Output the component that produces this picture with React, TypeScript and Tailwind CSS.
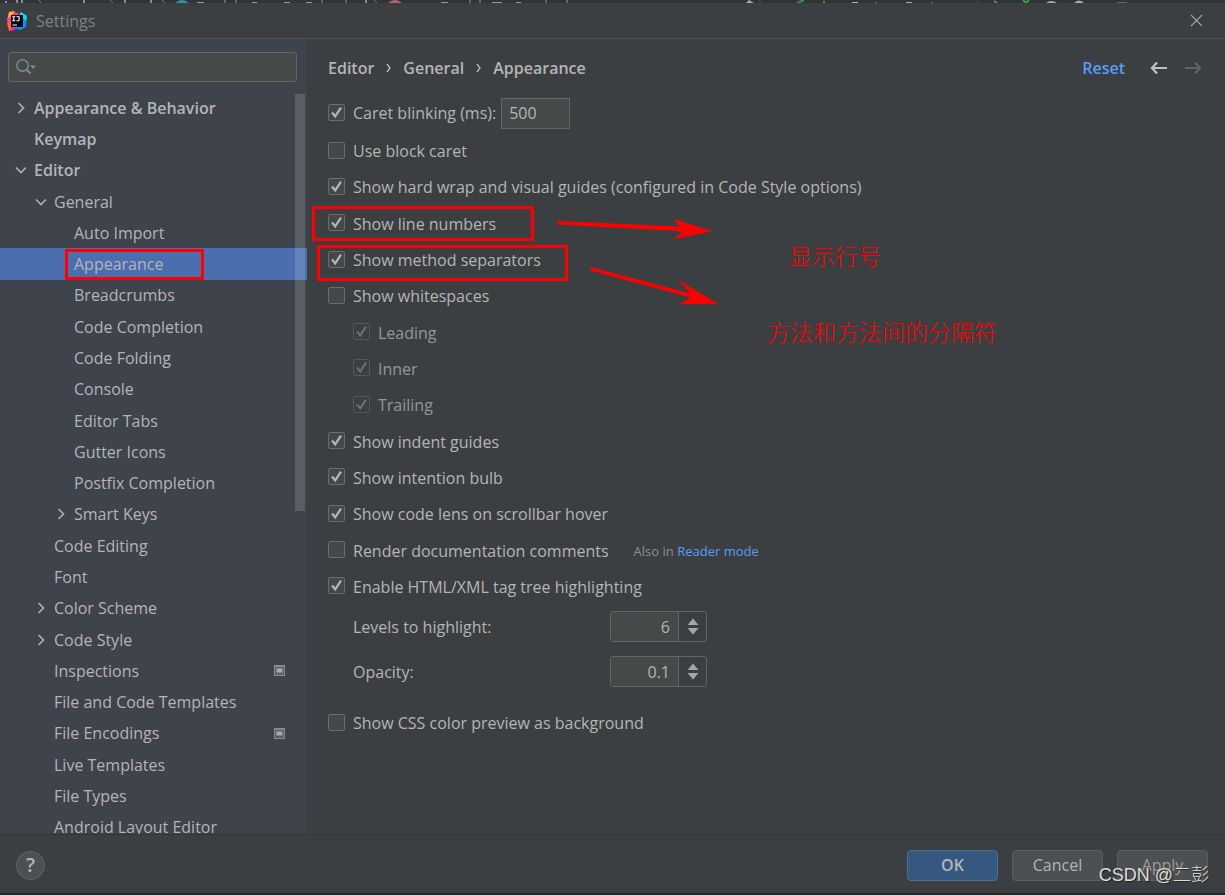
import React from "react";

type Node = { label: string; depth: number; arrow?: "open" | "closed"; selected?: boolean; project?: boolean };

const tree: Node[] = [
  { label: "Appearance & Behavior", depth: 0, arrow: "closed" },
  { label: "Keymap", depth: 0 },
  { label: "Editor", depth: 0, arrow: "open" },
  { label: "General", depth: 1, arrow: "open" },
  { label: "Auto Import", depth: 2 },
  { label: "Appearance", depth: 2, selected: true },
  { label: "Breadcrumbs", depth: 2 },
  { label: "Code Completion", depth: 2 },
  { label: "Code Folding", depth: 2 },
  { label: "Console", depth: 2 },
  { label: "Editor Tabs", depth: 2 },
  { label: "Gutter Icons", depth: 2 },
  { label: "Postfix Completion", depth: 2 },
  { label: "Smart Keys", depth: 2, arrow: "closed" },
  { label: "Code Editing", depth: 1 },
  { label: "Font", depth: 1 },
  { label: "Color Scheme", depth: 1, arrow: "closed" },
  { label: "Code Style", depth: 1, arrow: "closed" },
  { label: "Inspections", depth: 1, project: true },
  { label: "File and Code Templates", depth: 1 },
  { label: "File Encodings", depth: 1, project: true },
  { label: "Live Templates", depth: 1 },
  { label: "File Types", depth: 1 },
  { label: "Android Layout Editor", depth: 1 },
];

const indents = ["pl-[14px] font-semibold", "pl-[34px]", "pl-[54px]"];

function TreeRow({ node }: { node: Node }) {
  return (
    <li className={`flex ${node.selected ? "bg-[#4b6eaf]" : ""}`}>
      <button type="button" className={`flex flex-1 items-center pr-5 text-left ${indents[node.depth]}`}>
        <span className="flex w-5 shrink-0">
          {node.arrow && (
            <svg viewBox="0 0 14 14" className="size-[14px]" fill="none" stroke="#adb0b3" strokeWidth="1.7">
              {node.arrow === "open" ? <path d="M2 4.5l5 5 5-5" /> : <path d="M4.5 2l5 5-5 5" />}
            </svg>
          )}
        </span>
        <span className="relative flex-1 whitespace-nowrap">
          {node.label}
          {node.selected && (
            <span className="absolute -top-1 -left-[9px] h-[31px] w-[139px] border-3 border-[#ff0000]" />
          )}
        </span>
        {node.project && (
          <svg viewBox="0 0 11 11" className="mr-[2px] h-[11px] w-[11px]">
            <path d="M0 0h11v11H0z" fill="#848d95" />
            <path d="M1 2h9v8H1z" fill="#59626a" />
            <path d="M2.500 3.500h6v4h-6z" fill="#a0abb3" />
          </svg>
        )}
      </button>
    </li>
  );
}

type CheckProps = {
  label: string;
  checked?: boolean;
  disabled?: boolean;
  mark?: string;
  children?: React.ReactNode;
};

function Check({ label, checked, disabled, mark, children }: CheckProps) {
  return (
    <div className={`flex items-center ${disabled ? "pl-[25px] text-[#949698]" : ""}`}>
      <label className="relative flex items-center gap-2 whitespace-nowrap">
        <span className="relative mb-[2px] flex size-[17px] shrink-0">
          <input
            type="checkbox"
            defaultChecked={checked}
            disabled={disabled}
            className="peer size-[17px] appearance-none rounded-[2px] border border-[#6b6b6b] bg-[#43494a] disabled:border-[#555859] disabled:bg-[#3c3f41]"
          />
          <svg
            viewBox="0 0 17 17"
            className="pointer-events-none absolute inset-0 hidden text-[#b4b6b7] peer-checked:block peer-disabled:text-[#6a6d6f]"
            fill="none"
            stroke="currentColor"
            strokeWidth="2.2"
          >
            <path d="M4 8.5l3.2 3.8L13 3.6" />
          </svg>
        </span>
        {label}
        {mark && <span className={`absolute border-3 border-[#ff0000] ${mark}`} />}
      </label>
      {children}
    </div>
  );
}

function Spinner({ id, label, value }: { id: string; label: string; value: string }) {
  return (
    <div className="flex items-center pl-[25px]">
      <label htmlFor={id} className="w-[257px]">{label}</label>
      <div className="flex h-[31px] w-[97px] rounded-[3px] border border-[#646464]">
        <input id={id} defaultValue={value} className="w-0 flex-1 bg-[#45494a] pr-2 text-right" />
        <span className="flex w-[28px] flex-col items-center justify-center gap-[3px] border-l border-[#646464]">
          <button type="button" aria-label={`Increase ${label}`}>
            <svg viewBox="0 0 12 7" className="block h-[7px] w-3" fill="#a4a7a9"><path d="M6 0.500l5.500 6.500H0.500z" /></svg>
          </button>
          <button type="button" aria-label={`Decrease ${label}`}>
            <svg viewBox="0 0 12 7" className="block h-[7px] w-3" fill="#a4a7a9"><path d="M6 6.500L11.500 0H0.500z" /></svg>
          </button>
        </span>
      </div>
    </div>
  );
}

function TopStrip() {
  return (
    <svg className="h-[3px] w-full shrink-0 bg-[#313436]" viewBox="0 0 1225 3" preserveAspectRatio="xMinYMin slice">
      <path d="M6 1v2M17 0v3M22 0v3M84 0v3M125 0v3M151 0v3M366 0v3" stroke="#aaa" strokeWidth="1.5" />
      <path d="M39 0l2 3M110 0l3 3M162 0l3 3M374 0l3 3" stroke="#777" />
      <path d="M175 3q7-6 14 0z" fill="#3e8ba8" />
      <path d="M388 3q7-6 14 0z" fill="#b8616f" />
      <path d="M197 2.5h7M252 2.5h5M284 2.5h6M306 2.5h6M441 2.5h7M492 2.5h10M516 2.5h5M225 0v3M236 0v3M322 0v3M346 0v3M470 0v3M480 0v3M546 0v3M567 0v3" stroke="#999" />
      <path d="M746 3l3-3 5 3z" fill="#aaa" />
      <path d="M797 3l7-3M824 3v-2M994 1l3 2M1023 0l3 3 3-3" stroke="#3f9a49" strokeWidth="2" fill="none" />
      <path d="M852 2.5h6M876 2v1M906 2.5h6M932 2v1" stroke="#aaa" />
      <path d="M1046 3q5-4 11 0zM1074 3q5-5 10 0" fill="#aaa" />
      <path d="M760 0v3M799 0v3M978 0v3" stroke="#4c4f51" />
      <path d="M1117 2.5h10" stroke="#666" />
    </svg>
  );
}

function Logo() {
  return (
    <svg viewBox="0 0 20 20" className="size-5">
      <path d="M2 1l5-1 2 4-5 5-4 1z" fill="#ffb02e" />
      <path d="M0 8l4-3v6l-3 3z" fill="#f0439a" />
      <path d="M7 1l4 1 1 3H5z" fill="#ff3a68" />
      <path d="M0 12l4-2v6l4 1-3 2-3 1z" fill="#ff6a2c" />
      <path d="M3 16l5-1 1 3-4 2z" fill="#e22fae" />
      <path d="M12 4l2-3 6 4-1 11-6 3-6-2z" fill="#0b8ff5" />
      <path d="M12 4l2-3 6 4-1 5z" fill="#15d5ef" />
      <path d="M4 4h12v12H4z" fill="#0b0610" />
      <path d="M5.3 5.7h3M6.8 5.7v4M5.3 9.7h3M9.5 5.7h2.6v3q0 1-1 1H9.5M5.5 14h4.5" stroke="#fff" strokeWidth="1.1" fill="none" />
    </svg>
  );
}

const buttonBase = "h-[31px] w-[91px] rounded-[4px] border";

export default function App() {
  return (
    <div className="relative flex h-screen flex-col overflow-hidden bg-[#3c3f41] font-['Open_Sans','Noto_Sans_CJK_SC',sans-serif] text-[16px] leading-[22px] text-[#b4b5b6]">
      <TopStrip />
      <header className="flex h-9 shrink-0 items-center gap-[9px] border-b border-[#515355] px-[7px]">
        <Logo />
        <h1 className="flex-1 text-[16px] text-[#7e8082]">Settings</h1>
        <button type="button" aria-label="Close" className="mr-[15px]">
          <svg viewBox="0 0 13 13" className="block size-[13px]" stroke="#a0a2a3" strokeWidth="1.1"><path d="M1 1l11 11M12 1L1 12" /></svg>
        </button>
      </header>

      <div className="flex min-h-0 flex-1">
        <aside className="relative flex w-[307px] shrink-0 flex-col overflow-hidden bg-[#3e434c]">
          <div className="mx-2 mt-[13px] mr-[10px] mb-[10px] flex h-[30px] shrink-0 items-center rounded-[3px] border border-[#646566] bg-[#45494a] pl-[7px]">
            <svg viewBox="0 0 20 16" className="h-4 w-5 shrink-0" fill="none" stroke="#7f8b93" strokeWidth="1.4">
              <circle cx="6.5" cy="6.5" r="5.7" />
              <path d="M10.5 10.5l4 4" strokeWidth="2" />
              <path d="M14 6.5h6l-3 3.5z" fill="#7f8b93" stroke="none" />
            </svg>
            <input type="search" aria-label="Search settings" className="min-w-0 flex-1 bg-transparent px-1 outline-none" />
          </div>
          <ul className="grid h-[751px] shrink-0 auto-rows-fr">
            {tree.map((n) => (
              <TreeRow key={n.label + n.depth} node={n} />
            ))}
          </ul>
          <span className="absolute top-[55px] right-[2px] h-[417px] w-[10px] bg-white/15" />
        </aside>

        <main className="relative min-w-0 flex-1 pl-[21px]">
          <div className="flex h-[57px] items-center pr-[23px] font-semibold">
            <nav aria-label="Breadcrumb" className="flex flex-1 items-center gap-3">
              <span>Editor</span>
              <svg viewBox="0 0 5 8" className="h-2 w-[5px]" fill="none" stroke="#bbb" strokeWidth="1.3"><path d="M1 0l3 4-3 4" /></svg>
              <span>General</span>
              <svg viewBox="0 0 5 8" className="h-2 w-[5px]" fill="none" stroke="#bbb" strokeWidth="1.3"><path d="M1 0l3 4-3 4" /></svg>
              <span>Appearance</span>
            </nav>
            <a href="#reset" className="mr-[25px] text-[#589df6]">Reset</a>
            <button type="button" aria-label="Back" className="mr-4">
              <svg viewBox="0 0 18 14" className="h-[14px] w-[18px]" fill="none" stroke="#c0c2c3" strokeWidth="2.2"><path d="M17 7H2M7 1.500L2 7l5 5.500" /></svg>
            </button>
            <button type="button" aria-label="Forward" disabled>
              <svg viewBox="0 0 18 14" className="h-[14px] w-[18px]" fill="none" stroke="#606365" strokeWidth="2.2"><path d="M1 7h15M11 1.500L16 7l-5 5.500" /></svg>
            </button>
          </div>

          <div className="flex h-[34px] items-center">
            <Check label="Caret blinking (ms):" checked>
              <input aria-label="Caret blinking interval" defaultValue="500" className="ml-[5px] h-[31px] w-[69px] border border-[#646464] bg-[#45494a] pl-[7px]" />
            </Check>
          </div>
          <div className="mt-[3px] grid h-[472px] auto-rows-fr">
            <Check label="Use block caret" />
            <Check label="Show hard wrap and visual guides (configured in Code Style options)" checked />
            <Check label="Show line numbers" checked mark="-left-4 -top-[7px] h-[35px] w-[222px]" />
            <Check label="Show method separators" checked mark="-left-[11px] -top-[4px] h-[36px] w-[251px]" />
            <Check label="Show whitespaces" />
            <Check label="Leading" checked disabled />
            <Check label="Inner" checked disabled />
            <Check label="Trailing" checked disabled />
            <Check label="Show indent guides" checked />
            <Check label="Show intention bulb" checked />
            <Check label="Show code lens on scrollbar hover" checked />
            <Check label="Render documentation comments">
              <span className="ml-[25px] text-[13px] whitespace-nowrap text-[#8c8c8c]">
                Also in <a href="#reader" className="text-[#589df6]">Reader mode</a>
              </span>
            </Check>
            <Check label="Enable HTML/XML tag tree highlighting" checked />
          </div>
          <div className="mt-[6px] mb-[25px] flex flex-col gap-[14px]">
            <Spinner id="levels" label="Levels to highlight:" value="6" />
            <Spinner id="opacity" label="Opacity:" value="0.1" />
          </div>
          <Check label="Show CSS color preview as background" />

          <svg viewBox="0 0 170 100" className="pointer-events-none absolute top-[172px] left-[243px] h-[100px] w-[170px]" fill="#ff0000">
            <path d="M7.500 10l122 5.500-6-7.500 39 12.300-39 8 9.500-8L7.500 13.500z" />
            <path d="M40.500 56l100 26.500-13-14 40.500 24.500h-39l12-6.500-101-27z" />
          </svg>
          <p className="absolute top-[200px] left-[482px] text-[23px] leading-[34px] font-light text-[#ff0000]">显示行号</p>
          <p className="absolute top-[276px] left-[460px] text-[23px] leading-[34px] font-light whitespace-nowrap text-[#ff0000]">方法和方法间的分隔符</p>
        </main>
      </div>

      <footer className="flex h-[59px] shrink-0 items-center gap-[14px] border-t border-[#333638] pt-[2px] pr-[17px] pl-4">
        <button type="button" aria-label="Help" className="flex size-[29px] items-center justify-center rounded-full border border-[#606466] bg-[#4c5052] text-[20px] font-semibold">?</button>
        <span className="flex-1" />
        <button type="button" className={`${buttonBase} border-[#4a6f96] bg-[#365880] font-semibold`}>OK</button>
        <button type="button" className={`${buttonBase} border-[#5a5e60] bg-[#4c5052]`}>Cancel</button>
        <button type="button" className={`${buttonBase} border-[#5a5e60] bg-[#4c5052] text-[#999]`}>Apply</button>
      </footer>
      <div className="h-[2px] shrink-0 bg-[#242424]" />
      <p className="pointer-events-none absolute right-4 bottom-[6px] font-['Liberation_Sans','Noto_Sans_CJK_SC',sans-serif] text-[18px] leading-[28px] font-light text-[#dddddd] [text-shadow:1px_1px_1px_#222]">CSDN @二彭</p>
    </div>
  );
}
